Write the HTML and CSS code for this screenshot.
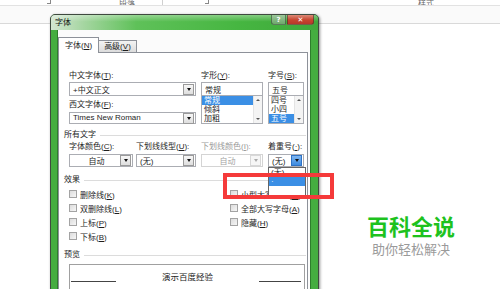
FILE: index.html
```html
<!DOCTYPE html>
<html lang="zh-CN">
<head>
    <meta charset="UTF-8">
    <title>字体</title>
    <link rel="stylesheet" href="styles.css">
</head>
<body>

    <!-- Ribbon behind the dialog -->
    <div class="ribbon">
        <div class="ribbon-labels">
            <span class="launcher first"></span>
            <span class="group-label para">段落</span>
            <span class="ribbon-sep"></span>
            <span class="launcher second"></span>
            <span class="group-label styles">样式</span>
        </div>
        <div class="ribbon-bar"></div>
    </div>

    <!-- Font dialog -->
    <div class="dialog">
        <div class="titlebar">
            <span class="title">字体</span>
            <div class="caption-btns">
                <span class="btn-help">?</span>
                <span class="btn-close">✕</span>
            </div>
        </div>
        <div class="frame">
            <div class="client">
                <div class="tabs">
                    <span class="tab active">字体(<u>N</u>)</span>
                    <span class="tab">高级(<u>V</u>)</span>
                </div>
                <div class="panel">

                    <div class="font-grid">
                        <div class="label">中文字体(<u>T</u>):</div>
                        <div class="label">字形(<u>Y</u>):</div>
                        <div class="label">字号(<u>S</u>):</div>

                        <div class="combo">
                            <span class="combo-text">+中文正文</span>
                            <span class="drop-btn"><i class="arrow"></i></span>
                        </div>
                        <div class="field">常规</div>
                        <div class="field">五号</div>

                        <div class="label low">西文字体(<u>F</u>):</div>
                        <div class="list style-list">
                            <div class="list-items">
                                <div class="list-item selected">常规</div>
                                <div class="list-item">倾斜</div>
                                <div class="list-item">加粗</div>
                            </div>
                            <div class="scrollbar"><i class="up"></i><i class="down"></i></div>
                        </div>
                        <div class="list size-list">
                            <div class="list-items">
                                <div class="list-item">四号</div>
                                <div class="list-item">小四</div>
                                <div class="list-item selected">五号</div>
                            </div>
                            <div class="scrollbar"><i class="up"></i><i class="down"></i></div>
                        </div>

                        <div class="combo latin">
                            <span class="combo-text">Times New Roman</span>
                            <span class="drop-btn"><i class="arrow"></i></span>
                        </div>
                    </div>

                    <div class="group-title">所有文字</div>
                    <div class="select-grid">
                        <div class="label">字体颜色(<u>C</u>):</div>
                        <div class="label">下划线线型(<u>U</u>):</div>
                        <div class="label disabled">下划线颜色(<u>I</u>):</div>
                        <div class="label">着重号(<u>·</u>):</div>

                        <div class="select color-sel">
                            <span class="select-text center">自动</span>
                            <span class="drop-btn"><i class="arrow"></i></span>
                        </div>
                        <div class="select line-sel">
                            <span class="select-text">(无)</span>
                            <span class="drop-btn"><i class="arrow"></i></span>
                        </div>
                        <div class="select line-color-sel disabled">
                            <span class="select-text center">自动</span>
                            <span class="drop-btn"><i class="arrow"></i></span>
                        </div>
                        <div class="select emph-sel open">
                            <span class="select-text">(无)</span>
                            <span class="drop-btn"><i class="arrow"></i></span>
                            <div class="dropdown">
                                <div class="dropdown-item">(无)</div>
                                <div class="dropdown-item selected">·</div>
                                <div class="dropdown-item"></div>
                            </div>
                        </div>
                    </div>

                    <div class="group-title effects">效果</div>
                    <div class="check-grid">
                        <label class="check"><span class="box"></span><span>删除线(<u>K</u>)</span></label>
                        <label class="check"><span class="box"></span><span>小型大写字母(<u>M</u>)</span></label>
                        <label class="check"><span class="box"></span><span>双删除线(<u>L</u>)</span></label>
                        <label class="check"><span class="box"></span><span>全部大写字母(<u>A</u>)</span></label>
                        <label class="check"><span class="box"></span><span>上标(<u>P</u>)</span></label>
                        <label class="check"><span class="box"></span><span>隐藏(<u>H</u>)</span></label>
                        <label class="check"><span class="box"></span><span>下标(<u>B</u>)</span></label>
                    </div>

                    <div class="group-title preview-title">预览</div>
                    <div class="preview">
                        <span class="preview-line"></span>
                        <span class="preview-text">演示百度经验</span>
                        <span class="preview-line short"></span>
                    </div>

                </div>
            </div>
        </div>
    </div>

    <!-- Annotation -->
    <div class="highlight-box"></div>

    <!-- Watermark -->
    <div class="watermark">
        <div class="wm-title">百科全说</div>
        <div class="wm-sub">助你轻松解决</div>
    </div>

</body>
</html>
```

FILE: styles.css
```css
/* Global */
body {
    margin: 0;
    width: 500px;
    height: 289px;
    overflow: hidden;
    position: relative;
    background: #ffffff;
    font-family: "Liberation Sans", "Noto Sans CJK SC", sans-serif;
    font-size: 8px;
    color: #1e1e1e;
}

u {
    text-decoration: underline;
}

/* Ribbon behind the dialog */
.ribbon-labels {
    display: flex;
    align-items: flex-end;
    height: 5px;
    overflow: hidden;
    border-bottom: 1px solid #e2e2e2;
}

.group-label {
    width: 16px;
    text-align: center;
    font-size: 8px;
    line-height: 8px;
    margin-bottom: -3px;
    color: #666;
}

.group-label.para {
    margin-left: 68px;
}

.group-label.styles {
    margin-left: 209px;
}

.launcher {
    width: 3px;
    height: 3px;
    margin-bottom: 1px;
    border-right: 1px solid #888;
    border-bottom: 1px solid #888;
}

.launcher.first {
    margin-left: 47px;
}

.launcher.second {
    margin-left: 42px;
}

.ribbon-sep {
    width: 1px;
    height: 5px;
    margin-left: 27px;
    background: #d0d0d0;
}

.ribbon-bar {
    height: 17px;
    background: #fafafa;
    border-bottom: 1px solid #d9d9d9;
}

/* Dialog window */
.dialog {
    position: absolute;
    left: 50px;
    top: 14px;
    width: 267px;
    height: 300px;
    border: 1px solid #3f4a3f;
    border-radius: 5px 5px 0 0;
    background: #45ad40;
    box-shadow: 1px 1px 3px rgba(0, 0, 0, 0.45);
}

.titlebar {
    height: 15px;
    display: flex;
    justify-content: space-between;
    align-items: flex-start;
    border-radius: 4px 4px 0 0;
    background:
        linear-gradient(to bottom, rgba(255, 255, 255, 0.35), rgba(255, 255, 255, 0) 45%),
        linear-gradient(to right, #d3e5d1 0%, #a6d6a2 12%, #5fc159 32%, #46b641 70%, #3fa83b 100%);
}

.title {
    margin: 2px 0 0 4px;
    font-size: 8px;
    line-height: 12px;
    color: #111;
}

.caption-btns {
    display: flex;
    gap: 1px;
    margin-right: 4px;
}

.btn-help,
.btn-close {
    height: 10px;
    display: flex;
    align-items: center;
    justify-content: center;
    color: #fff;
    font-family: "DejaVu Sans", sans-serif;
    font-weight: bold;
    border: 1px solid rgba(40, 60, 40, 0.55);
    border-top: none;
    box-sizing: border-box;
}

.btn-help {
    width: 15px;
    font-size: 7px;
    border-radius: 0 0 0 3px;
    background: linear-gradient(to bottom, #9cc79a, #6ea86b);
}

.btn-close {
    width: 27px;
    font-size: 7px;
    border-radius: 0 0 3px 0;
    background: linear-gradient(to bottom, #dc8a77, #c7452f 55%, #b8382a);
}

.frame {
    padding: 0 7px 0 6px;
    height: 285px;
}

.client {
    height: 100%;
    background: #fbfbfb;
    border-left: 1px solid #2e7d2c;
    border-right: 1px solid #2e7d2c;
    box-sizing: border-box;
    padding-top: 6px;
}

/* Tabs */
.tabs {
    display: flex;
    align-items: flex-end;
    height: 16px;
    position: relative;
    z-index: 1;
}

.tab {
    height: 11px;
    line-height: 11px;
    padding: 0 5px;
    border: 1px solid #8d9199;
    border-bottom: none;
    background: linear-gradient(to bottom, #f3f3f3, #dcdcdc);
    margin-left: -1px;
}

.tab.active {
    height: 15px;
    line-height: 15px;
    padding: 0 6px;
    margin-left: 0;
    margin-bottom: -1px;
    background: #ffffff;
    position: relative;
}

.panel {
    margin-right: 2px;
    height: 260px;
    border: 1px solid #8d9199;
    background: #ffffff;
    padding: 17px 1px 0 5px;
    box-sizing: border-box;
}

.label {
    line-height: 12px;
    white-space: nowrap;
}

.label.low {
    align-self: end;
    line-height: 14px;
}

.label.disabled {
    color: #9a9a9a;
}

/* Top font grid */
.font-grid {
    margin-left: 5px;
    display: grid;
    grid-template-columns: 127px 62px 36px;
    grid-template-rows: 12px 14px 16px 12px;
    column-gap: 5px;
}

.combo,
.field,
.select {
    display: flex;
    align-items: center;
    border: 1px solid #abadb3;
    background: #fff;
    box-sizing: border-box;
}

.combo-text {
    flex: 1;
    padding-left: 3px;
    white-space: nowrap;
}

.combo.latin {
    line-height: 10px;
}

.field {
    padding-left: 3px;
}

.drop-btn {
    width: 9px;
    height: 9px;
    margin-right: 1px;
    border: 1px solid #9a9a9a;
    background: linear-gradient(to bottom, #f7f7f7, #dedede);
    display: flex;
    align-items: center;
    justify-content: center;
}

.arrow {
    width: 0;
    height: 0;
    border-left: 2px solid transparent;
    border-right: 2px solid transparent;
    border-top: 3px solid #111;
}

.list {
    grid-row: 3 / 5;
    display: flex;
    height: 28px;
    border: 1px solid #abadb3;
    border-top: none;
    box-sizing: border-box;
}

.style-list {
    grid-column: 2;
}

.size-list {
    grid-column: 3;
}

.list-items {
    flex: 1;
}

.list-item {
    height: 9px;
    line-height: 9px;
    padding-left: 2px;
}

.list-item.selected {
    background: #3b8fe5;
    color: #fff;
}

.scrollbar {
    width: 8px;
    background: #f4f4f4;
    border-left: 1px solid #e4e4e4;
    display: flex;
    flex-direction: column;
    justify-content: space-between;
    align-items: center;
    padding: 3px 0;
}

.scrollbar i {
    width: 0;
    height: 0;
    border-left: 2px solid transparent;
    border-right: 2px solid transparent;
}

.scrollbar .up {
    border-bottom: 2px solid #555;
}

.scrollbar .down {
    border-top: 2px solid #555;
}

/* Group headings with rule */
.group-title {
    display: flex;
    align-items: center;
    gap: 4px;
    line-height: 12px;
    margin-top: 5px;
}

.group-title::after {
    content: "";
    flex: 1;
    height: 1px;
    background: #dcdcdc;
}

.group-title.effects {
    margin-top: 7px;
}

.group-title.preview-title {
    margin-top: 6px;
}

/* Colour / underline selects */
.select-grid {
    margin-left: 5px;
    display: grid;
    grid-template-columns: 67px 65px 67px 36px;
    grid-template-rows: 12px 14px;
}

.select {
    align-self: end;
    height: 13px;
}

.color-sel {
    width: 64px;
}

.line-sel {
    width: 60px;
}

.line-color-sel {
    width: 62px;
}

.emph-sel {
    width: 36px;
    position: relative;
}

.select-text {
    flex: 1;
    padding-left: 3px;
    white-space: nowrap;
}

.select-text.center {
    text-align: center;
}

.select.disabled {
    border-color: #d4d4d4;
    color: #a3a3a3;
}

.select.disabled .drop-btn {
    border-color: #d8d8d8;
    background: #f6f6f6;
}

.select.disabled .arrow {
    border-top-color: #aaa;
}

.emph-sel .drop-btn {
    border-color: #2f72c4;
    background: linear-gradient(to bottom, #7db5f0, #3d8be0);
}

/* Open dropdown list */
.dropdown {
    position: absolute;
    left: -1px;
    top: 12px;
    width: 36px;
    border: 1px solid #666;
    background: #fff;
    z-index: 3;
}

.dropdown-item {
    height: 9px;
    line-height: 9px;
    padding-left: 2px;
}

.dropdown-item.selected {
    background: #3b8fe5;
    color: #fff;
}

/* Effects check boxes */
.check-grid {
    margin: 1px 0 0 5px;
    display: grid;
    grid-template-columns: 161px 1fr;
    grid-auto-rows: 14px;
}

.check {
    display: flex;
    align-items: center;
    gap: 3px;
    white-space: nowrap;
}

.box {
    width: 6px;
    height: 6px;
    border: 1px solid #a3a3a3;
    background: linear-gradient(135deg, #dcdcdc, #f6f6f6);
}

/* Preview */
.preview {
    margin: 3px 0 0 5px;
    width: 236px;
    height: 40px;
    border: 1px solid #a0a0a0;
    box-sizing: border-box;
    display: flex;
    justify-content: space-between;
    align-items: flex-start;
    padding: 0 3px 0 1px;
}

.preview-line {
    width: 45px;
    height: 1px;
    margin-top: 16px;
    background: #444;
}

.preview-line.short {
    width: 42px;
}

.preview-text {
    margin-top: 6px;
    font-size: 8.5px;
    line-height: 12px;
    color: #222;
}

/* Red annotation box */
.highlight-box {
    position: absolute;
    left: 223px;
    top: 173px;
    width: 111px;
    height: 26px;
    border: 4px solid #f53a3a;
    box-sizing: border-box;
    z-index: 5;
}

/* Watermark */
.watermark {
    position: absolute;
    left: 361px;
    top: 214px;
    width: 100px;
    display: flex;
    flex-direction: column;
    align-items: center;
}

.wm-title {
    font-size: 22px;
    line-height: 28px;
    font-weight: bold;
    color: #1ec21e;
}

.wm-sub {
    font-size: 13px;
    line-height: 16px;
    color: #9a9a9a;
}
```
